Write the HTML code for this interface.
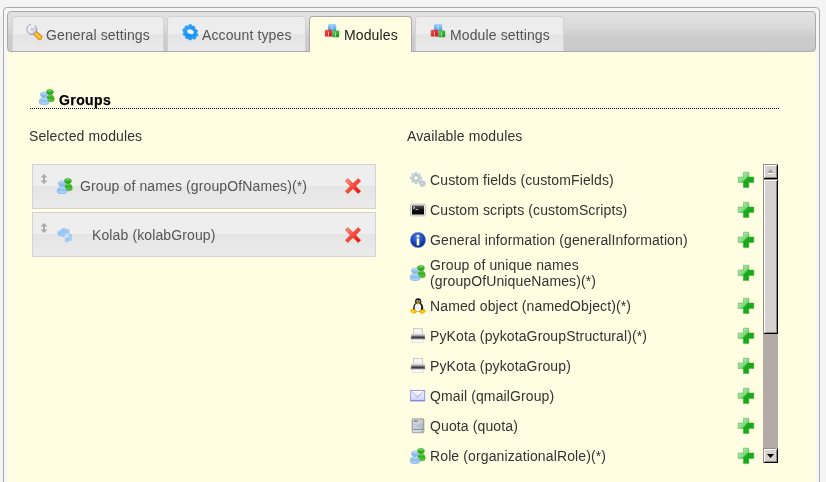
<!DOCTYPE html>
<html><head><meta charset="utf-8">
<style>
html,body{margin:0;padding:0;}
body{width:826px;height:482px;overflow:hidden;background:#f4f4f4;position:relative;font-family:"Liberation Sans",sans-serif;font-size:14px;letter-spacing:0.12px;}
.abs{position:absolute;} .abs>svg{display:block;}
.ic{position:absolute;width:16px;height:16px;}
.ic svg{display:block;overflow:visible;}
#outer{left:3px;top:7px;width:815px;height:520px;border:1px solid #aaaaaa;border-radius:4px;background:#f6f6f8;}
#bar{left:7px;top:11px;width:807px;height:39px;border:1px solid #aaaaaa;border-radius:4px;background:linear-gradient(#e3e3e3 0%,#d9d9d9 40%,#cdcdcd 62%,#cacaca 100%);}
#panel{left:7px;top:52px;width:809px;height:440px;background:#fffde2;}
.tab{position:absolute;top:16px;height:35px;border:1px solid #d3d3d3;border-bottom:0;border-radius:4px 4px 0 0;background:linear-gradient(#ededed 0,#ededed 50%,#e4e4e4 50%,#e9e9e9 100%);color:#555;white-space:nowrap;box-sizing:border-box;}
.tab.active{height:36px;border-color:#aaaaaa;background:#fffde2;color:#212121;}
.tab .ic{left:13px;top:6px;}
.tab span{will-change:transform;position:absolute;left:34px;top:10px;line-height:16px;}
.txt{will-change:transform;position:absolute;white-space:nowrap;line-height:16px;color:#333;}
.box{position:absolute;left:32px;width:344px;height:45px;box-sizing:border-box;border:1px solid #d3d3d3;background:linear-gradient(#eeeeee 0,#eeeeee 50%,#e5e5e5 50%,#ebebeb 100%);}
#sb{left:763px;top:164px;width:15px;height:299px;background:#b3aba8;}
.btn{position:absolute;left:0;width:15px;height:15px;box-sizing:border-box;background:#d6d2cf;box-shadow:inset 1px 1px #948e8b,inset -1px -1px #000,inset 2px 2px #fff,inset -2px -2px #8c8684;}
</style></head><body>
<div id="outer" class="abs"></div>
<div id="bar" class="abs"></div>
<div id="panel" class="abs"></div>

<div class="tab" style="left:12px;width:152px;"><div class="ic" style="left:13px;top:6px;"><svg width="16" height="16" viewBox="0 0 16 16">
<defs><linearGradient id="wh" x1="0" y1="0" x2="1" y2="1"><stop offset="0" stop-color="#ffffff"/><stop offset="0.6" stop-color="#e4e4ee"/><stop offset="1" stop-color="#a4a6bc"/></linearGradient>
<linearGradient id="wo" gradientUnits="userSpaceOnUse" x1="7" y1="14" x2="14" y2="7"><stop offset="0" stop-color="#f08000"/><stop offset="0.5" stop-color="#ffd030"/><stop offset="1" stop-color="#f07000"/></linearGradient>
<mask id="wm"><rect width="16" height="16" fill="#fff"/><path d="M4.8 -1 L8.6 -1 L8.2 4.6 Q6.6 6.4 4.6 5 Z" fill="#000"/></mask></defs>
<g transform="translate(0.2,0.8)"><line x1="8.6" y1="8.8" x2="13.6" y2="13.8" stroke="#d86000" stroke-width="5" stroke-linecap="round"/>
<line x1="8.6" y1="8.8" x2="13.6" y2="13.8" stroke="url(#wo)" stroke-width="3.8" stroke-linecap="round"/>
<circle cx="5.6" cy="5.6" r="5" fill="url(#wh)" stroke="#8a8ca8" stroke-width="0.9" mask="url(#wm)"/>
<path d="M4.6 5 Q6.6 6.4 8.2 4.6" fill="none" stroke="#8a8ca8" stroke-width="0.8"/></g>
</svg></div><span style="left:33px">General settings</span></div>
<div class="tab" style="left:167px;width:139px;"><div class="ic" style="left:13px;top:6px;"><svg width="16" height="16" viewBox="0 0 16 16">
<defs><linearGradient id="gr" x1="0" y1="0" x2="1" y2="1"><stop offset="0" stop-color="#3cb4ff"/><stop offset="0.5" stop-color="#1890f8"/><stop offset="1" stop-color="#2aa8ff"/></linearGradient></defs>
<g transform="translate(9.3,9.6) scale(1.08)">
<path fill="url(#gr)" d="M-1.2 -7.2 L1.2 -7.2 L1.6 -5.6 L3.3 -6.1 L4.4 -4.5 L3.6 -3.3 L5.8 -2.8 L6.6 -1 L5.6 0.4 L7 1.4 L6.8 3.2 L5 3.6 L5.2 5.2 L3.4 6.3 L2.2 5.2 L0.6 6.8 L-1.3 6.6 L-1.7 5 L-3.4 5.8 L-4.6 4.4 L-3.8 3 L-6 2.6 L-6.8 0.8 L-5.6 -0.5 L-7 -1.6 L-6.6 -3.4 L-4.9 -3.7 L-5 -5.4 L-3.3 -6.4 L-2 -5.3 Z" stroke="#2aa0ff" stroke-width="0.8" stroke-linejoin="round"/>
<ellipse cx="-0.2" cy="-0.8" rx="3.2" ry="2.1" transform="rotate(20)" fill="#f4f8fc"/>
</g></svg></div><span>Account types</span></div>
<div class="tab active" style="left:309px;width:103px;"><div class="ic" style="left:13px;top:6px;"><svg width="16" height="16" viewBox="0 0 16 16">
<defs><linearGradient id="cb" x1="0" y1="0" x2="0" y2="1"><stop offset="0" stop-color="#a8d8ff"/><stop offset="1" stop-color="#3a8ee0"/></linearGradient>
<linearGradient id="cr" x1="0" y1="0" x2="1" y2="1"><stop offset="0" stop-color="#f06060"/><stop offset="1" stop-color="#d00000"/></linearGradient>
<linearGradient id="cg" x1="0" y1="0" x2="1" y2="1"><stop offset="0" stop-color="#70d070"/><stop offset="1" stop-color="#109010"/></linearGradient></defs>
<rect x="5" y="1" width="8.2" height="7.4" rx="1.2" fill="url(#cb)"/>
<rect x="1.8" y="6.8" width="7.6" height="6.8" rx="1.2" fill="url(#cr)"/>
<rect x="8.8" y="7.4" width="7.4" height="6.8" rx="1.2" fill="url(#cg)"/>
<rect x="8.7" y="3" width="0.7" height="4" fill="#fff" opacity="0.8"/><rect x="5.2" y="8.8" width="0.7" height="4" fill="#fff" opacity="0.8"/><rect x="12" y="9.5" width="0.7" height="4" fill="#fff" opacity="0.8"/>
</svg></div><span>Modules</span></div>
<div class="tab" style="left:415px;width:149px;"><div class="ic" style="left:13px;top:6px;"><svg width="16" height="16" viewBox="0 0 16 16">
<defs><linearGradient id="cb" x1="0" y1="0" x2="0" y2="1"><stop offset="0" stop-color="#a8d8ff"/><stop offset="1" stop-color="#3a8ee0"/></linearGradient>
<linearGradient id="cr" x1="0" y1="0" x2="1" y2="1"><stop offset="0" stop-color="#f06060"/><stop offset="1" stop-color="#d00000"/></linearGradient>
<linearGradient id="cg" x1="0" y1="0" x2="1" y2="1"><stop offset="0" stop-color="#70d070"/><stop offset="1" stop-color="#109010"/></linearGradient></defs>
<rect x="5" y="1" width="8.2" height="7.4" rx="1.2" fill="url(#cb)"/>
<rect x="1.8" y="6.8" width="7.6" height="6.8" rx="1.2" fill="url(#cr)"/>
<rect x="8.8" y="7.4" width="7.4" height="6.8" rx="1.2" fill="url(#cg)"/>
<rect x="8.7" y="3" width="0.7" height="4" fill="#fff" opacity="0.8"/><rect x="5.2" y="8.8" width="0.7" height="4" fill="#fff" opacity="0.8"/><rect x="12" y="9.5" width="0.7" height="4" fill="#fff" opacity="0.8"/>
</svg></div><span>Module settings</span></div>

<div class="ic" style="left:39px;top:89px;"><svg width="16" height="16" viewBox="0 0 16 16">
<defs><linearGradient id="gg" x1="0" y1="0" x2="0" y2="1"><stop offset="0" stop-color="#a0f080"/><stop offset="0.5" stop-color="#30b81c"/><stop offset="1" stop-color="#2aa818"/></linearGradient>
<linearGradient id="gg2" x1="0" y1="0" x2="0" y2="1"><stop offset="0" stop-color="#90e870"/><stop offset="0.35" stop-color="#2cb01a"/><stop offset="1" stop-color="#58d030"/></linearGradient>
<linearGradient id="gb" x1="0" y1="0" x2="0" y2="1"><stop offset="0" stop-color="#e0f0ff"/><stop offset="0.5" stop-color="#90c4f4"/><stop offset="1" stop-color="#84bcf0"/></linearGradient>
<linearGradient id="gb2" x1="0" y1="0" x2="0" y2="1"><stop offset="0" stop-color="#cfe6ff"/><stop offset="0.4" stop-color="#88c0f2"/><stop offset="1" stop-color="#b4d8fc"/></linearGradient></defs>
<path d="M7.6 10.8 C7.5 8.2 8.6 5.6 11.4 5.6 C14.2 5.6 15.3 8.2 15.2 10.8 C15.2 12.3 13.8 12.7 11.4 12.7 C9 12.7 7.6 12.3 7.6 10.8 Z" fill="url(#gg2)" stroke="#2c8c1c" stroke-width="0.5"/>
<ellipse cx="10.9" cy="2.9" rx="3.5" ry="2.6" fill="url(#gg)" stroke="#2c8c1c" stroke-width="0.5"/>
<path d="M0.3 13.4 C0.1 10.8 1.4 8.6 5 8.6 C8.6 8.6 10 10.8 9.8 13.4 C9.8 15.1 8 15.6 5 15.6 C2 15.6 0.3 15.1 0.3 13.4 Z" fill="url(#gb2)" stroke="#6a9ad4" stroke-width="0.5"/>
<ellipse cx="4.9" cy="5.6" rx="3.4" ry="2.7" fill="url(#gb)" stroke="#6a9ad4" stroke-width="0.5"/>
</svg></div>
<div class="txt" style="left:59px;top:92px;font-weight:bold;color:#000;font-size:14px;letter-spacing:0.4px;-webkit-text-stroke:0.25px #000;">Groups</div>
<div class="abs" style="left:30px;top:108px;width:749px;height:1px;background:repeating-linear-gradient(90deg,#000 0,#000 1px,transparent 1px,transparent 2px);"></div>

<div class="txt" style="left:29px;top:128px;">Selected modules</div>
<div class="txt" style="left:407px;top:128px;">Available modules</div>

<div class="box" style="top:164px;"></div>
<div class="box" style="top:212px;"></div>
<div class="abs" style="left:40px;top:174px;line-height:0"><svg width="8" height="10" viewBox="0 0 8 10"><path d="M4 0 L7.5 3.5 L5 3.5 L5 6.5 L7.5 6.5 L4 10 L0.5 6.5 L3 6.5 L3 3.5 L0.5 3.5 Z" fill="#ababab"/></svg></div>
<div class="abs" style="left:40px;top:223px;line-height:0"><svg width="8" height="10" viewBox="0 0 8 10"><path d="M4 0 L7.5 3.5 L5 3.5 L5 6.5 L7.5 6.5 L4 10 L0.5 6.5 L3 6.5 L3 3.5 L0.5 3.5 Z" fill="#ababab"/></svg></div>
<div class="ic" style="left:57px;top:178px;"><svg width="16" height="16" viewBox="0 0 16 16">
<defs><linearGradient id="gg" x1="0" y1="0" x2="0" y2="1"><stop offset="0" stop-color="#a0f080"/><stop offset="0.5" stop-color="#30b81c"/><stop offset="1" stop-color="#2aa818"/></linearGradient>
<linearGradient id="gg2" x1="0" y1="0" x2="0" y2="1"><stop offset="0" stop-color="#90e870"/><stop offset="0.35" stop-color="#2cb01a"/><stop offset="1" stop-color="#58d030"/></linearGradient>
<linearGradient id="gb" x1="0" y1="0" x2="0" y2="1"><stop offset="0" stop-color="#e0f0ff"/><stop offset="0.5" stop-color="#90c4f4"/><stop offset="1" stop-color="#84bcf0"/></linearGradient>
<linearGradient id="gb2" x1="0" y1="0" x2="0" y2="1"><stop offset="0" stop-color="#cfe6ff"/><stop offset="0.4" stop-color="#88c0f2"/><stop offset="1" stop-color="#b4d8fc"/></linearGradient></defs>
<path d="M7.6 10.8 C7.5 8.2 8.6 5.6 11.4 5.6 C14.2 5.6 15.3 8.2 15.2 10.8 C15.2 12.3 13.8 12.7 11.4 12.7 C9 12.7 7.6 12.3 7.6 10.8 Z" fill="url(#gg2)" stroke="#2c8c1c" stroke-width="0.5"/>
<ellipse cx="10.9" cy="2.9" rx="3.5" ry="2.6" fill="url(#gg)" stroke="#2c8c1c" stroke-width="0.5"/>
<path d="M0.3 13.4 C0.1 10.8 1.4 8.6 5 8.6 C8.6 8.6 10 10.8 9.8 13.4 C9.8 15.1 8 15.6 5 15.6 C2 15.6 0.3 15.1 0.3 13.4 Z" fill="url(#gb2)" stroke="#6a9ad4" stroke-width="0.5"/>
<ellipse cx="4.9" cy="5.6" rx="3.4" ry="2.7" fill="url(#gb)" stroke="#6a9ad4" stroke-width="0.5"/>
</svg></div>
<div class="ic" style="left:57px;top:227px;"><svg width="16" height="16" viewBox="0 0 16 16"><g fill="#a2cbf6">
<circle cx="3.2" cy="6.2" r="3"/><circle cx="6.6" cy="4" r="3.1"/><circle cx="10.2" cy="4.6" r="2.6"/><circle cx="6" cy="7.4" r="2.6"/>
<circle cx="13" cy="9" r="2.2"/><circle cx="10.2" cy="12" r="2.5"/><circle cx="13" cy="12" r="2.1"/><circle cx="9.5" cy="14" r="1.6"/>
</g><g fill="#8cbcf0" opacity="0.6"><circle cx="6.6" cy="4.5" r="1.5"/><circle cx="3" cy="6.5" r="1.3"/><circle cx="11" cy="12" r="1.2"/></g>
<path d="M8.8 9.6 Q11 8.6 12.2 10" stroke="#eeeeee" stroke-width="1" fill="none"/></svg></div>
<div class="txt" style="left:80px;top:178px;color:#555;">Group of names (groupOfNames)(*)</div>
<div class="txt" style="left:92px;top:227px;color:#555;">Kolab (kolabGroup)</div>
<div class="ic" style="left:345px;top:178px;"><svg width="16" height="16" viewBox="0 0 16 16">
<defs><linearGradient id="xr" x1="0" y1="0" x2="1" y2="1"><stop offset="0" stop-color="#ff9a88"/><stop offset="0.5" stop-color="#f84a3a"/><stop offset="1" stop-color="#ee0000"/></linearGradient></defs>
<path d="M2.8 0.6 L8 5.6 L13.2 0.6 L15.6 3 L10.6 8.1 L15.6 13.2 L13.2 15.6 L8 10.5 L2.8 15.6 L0.4 13.2 L5.4 8.1 L0.4 3 Z" fill="url(#xr)" stroke="#c82010" stroke-width="0.5" stroke-linejoin="round"/>
</svg></div>
<div class="ic" style="left:345px;top:227px;"><svg width="16" height="16" viewBox="0 0 16 16">
<defs><linearGradient id="xr" x1="0" y1="0" x2="1" y2="1"><stop offset="0" stop-color="#ff9a88"/><stop offset="0.5" stop-color="#f84a3a"/><stop offset="1" stop-color="#ee0000"/></linearGradient></defs>
<path d="M2.8 0.6 L8 5.6 L13.2 0.6 L15.6 3 L10.6 8.1 L15.6 13.2 L13.2 15.6 L8 10.5 L2.8 15.6 L0.4 13.2 L5.4 8.1 L0.4 3 Z" fill="url(#xr)" stroke="#c82010" stroke-width="0.5" stroke-linejoin="round"/>
</svg></div>

<div class="ic" style="left:410px;top:172px;"><svg width="16" height="16" viewBox="0 0 16 16">
<g fill="#cbd8e6" stroke="#9fb0c4" stroke-width="0.6">
<path d="M5.2 0.6 L6.8 0.6 L7.1 2 L8.3 2.5 L9.4 1.6 L10.5 2.7 L9.7 3.8 L10.2 5 L11.6 5.3 L11.6 6.9 L10.2 7.2 L9.7 8.4 L10.5 9.5 L9.4 10.6 L8.3 9.8 L7.1 10.3 L6.8 11.6 L5.2 11.6 L4.9 10.3 L3.7 9.8 L2.6 10.6 L1.5 9.5 L2.3 8.4 L1.8 7.2 L0.4 6.9 L0.4 5.3 L1.8 5 L2.3 3.8 L1.5 2.7 L2.6 1.6 L3.7 2.5 L4.9 2 Z"/>
<path d="M11.9 8.6 L13 8.6 L13.3 9.5 L14.2 9.1 L14.9 9.9 L14.4 10.7 L15.4 11 L15.4 12.1 L14.4 12.4 L14.9 13.2 L14.2 14 L13.3 13.6 L13 14.6 L11.9 14.6 L11.6 13.6 L10.7 14 L10 13.2 L10.5 12.4 L9.5 12.1 L9.5 11 L10.5 10.7 L10 9.9 L10.7 9.1 L11.6 9.5 Z"/>
</g>
<circle cx="6" cy="6.1" r="2.5" fill="#fffde2" stroke="#8a9cb2" stroke-width="0.7"/>
<circle cx="12.45" cy="11.6" r="1.1" fill="#fffde2" stroke="#8a9cb2" stroke-width="0.5"/>
</svg></div><div class="txt" style="left:430px;top:172px;">Custom fields (customFields)</div><div class="ic" style="left:738px;top:172px;"><svg width="16" height="16" viewBox="0 0 16 16">
<defs><linearGradient id="pg" x1="0" y1="0" x2="1" y2="1"><stop offset="0" stop-color="#c8f0c8"/><stop offset="0.42" stop-color="#7ed87e"/><stop offset="0.5" stop-color="#1aa81a"/><stop offset="1" stop-color="#10b010"/></linearGradient></defs>
<path d="M5.4 0.2 L10.8 0.2 L10.8 5 L15.8 5 L15.8 10.6 L10.8 10.6 L10.8 15.6 L5.4 15.6 L5.4 10.6 L0.2 10.6 L0.2 5 L5.4 5 Z" fill="url(#pg)" stroke="#2aa02a" stroke-width="0.4" stroke-linejoin="round"/>
</svg></div><div class="ic" style="left:410px;top:202px;"><svg width="16" height="16" viewBox="0 0 16 16">
<defs><linearGradient id="tg" x1="0" y1="0" x2="0" y2="1"><stop offset="0" stop-color="#555"/><stop offset="0.5" stop-color="#111"/><stop offset="1" stop-color="#000"/></linearGradient></defs>
<rect x="0.6" y="2.1" width="14.8" height="11.8" rx="1" fill="#ececec" stroke="#b4b4b4" stroke-width="0.8"/>
<rect x="2" y="3.5" width="12" height="9" fill="url(#tg)"/>
<path d="M3 4.6 L5 5.8 L3 7" stroke="#fff" stroke-width="0.7" fill="none"/><rect x="5.5" y="7" width="2.5" height="0.8" fill="#ddd"/>
</svg></div><div class="txt" style="left:430px;top:202px;">Custom scripts (customScripts)</div><div class="ic" style="left:738px;top:202px;"><svg width="16" height="16" viewBox="0 0 16 16">
<defs><linearGradient id="pg" x1="0" y1="0" x2="1" y2="1"><stop offset="0" stop-color="#c8f0c8"/><stop offset="0.42" stop-color="#7ed87e"/><stop offset="0.5" stop-color="#1aa81a"/><stop offset="1" stop-color="#10b010"/></linearGradient></defs>
<path d="M5.4 0.2 L10.8 0.2 L10.8 5 L15.8 5 L15.8 10.6 L10.8 10.6 L10.8 15.6 L5.4 15.6 L5.4 10.6 L0.2 10.6 L0.2 5 L5.4 5 Z" fill="url(#pg)" stroke="#2aa02a" stroke-width="0.4" stroke-linejoin="round"/>
</svg></div><div class="ic" style="left:410px;top:232px;"><svg width="16" height="16" viewBox="0 0 16 16">
<defs><radialGradient id="ib" cx="0.45" cy="0.3" r="0.75"><stop offset="0" stop-color="#4a7ee8"/><stop offset="0.6" stop-color="#1a3eb0"/><stop offset="1" stop-color="#0a2a88"/></radialGradient></defs>
<circle cx="8" cy="8" r="7.7" fill="url(#ib)" stroke="#8aa8e0" stroke-width="0.4"/>
<circle cx="8" cy="4.2" r="1.4" fill="#fff"/><rect x="6.7" y="6.4" width="2.6" height="7" fill="#fff"/>
</svg></div><div class="txt" style="left:430px;top:232px;">General information (generalInformation)</div><div class="ic" style="left:738px;top:232px;"><svg width="16" height="16" viewBox="0 0 16 16">
<defs><linearGradient id="pg" x1="0" y1="0" x2="1" y2="1"><stop offset="0" stop-color="#c8f0c8"/><stop offset="0.42" stop-color="#7ed87e"/><stop offset="0.5" stop-color="#1aa81a"/><stop offset="1" stop-color="#10b010"/></linearGradient></defs>
<path d="M5.4 0.2 L10.8 0.2 L10.8 5 L15.8 5 L15.8 10.6 L10.8 10.6 L10.8 15.6 L5.4 15.6 L5.4 10.6 L0.2 10.6 L0.2 5 L5.4 5 Z" fill="url(#pg)" stroke="#2aa02a" stroke-width="0.4" stroke-linejoin="round"/>
</svg></div><div class="ic" style="left:410px;top:265px;"><svg width="16" height="16" viewBox="0 0 16 16">
<defs><linearGradient id="gg" x1="0" y1="0" x2="0" y2="1"><stop offset="0" stop-color="#a0f080"/><stop offset="0.5" stop-color="#30b81c"/><stop offset="1" stop-color="#2aa818"/></linearGradient>
<linearGradient id="gg2" x1="0" y1="0" x2="0" y2="1"><stop offset="0" stop-color="#90e870"/><stop offset="0.35" stop-color="#2cb01a"/><stop offset="1" stop-color="#58d030"/></linearGradient>
<linearGradient id="gb" x1="0" y1="0" x2="0" y2="1"><stop offset="0" stop-color="#e0f0ff"/><stop offset="0.5" stop-color="#90c4f4"/><stop offset="1" stop-color="#84bcf0"/></linearGradient>
<linearGradient id="gb2" x1="0" y1="0" x2="0" y2="1"><stop offset="0" stop-color="#cfe6ff"/><stop offset="0.4" stop-color="#88c0f2"/><stop offset="1" stop-color="#b4d8fc"/></linearGradient></defs>
<path d="M7.6 10.8 C7.5 8.2 8.6 5.6 11.4 5.6 C14.2 5.6 15.3 8.2 15.2 10.8 C15.2 12.3 13.8 12.7 11.4 12.7 C9 12.7 7.6 12.3 7.6 10.8 Z" fill="url(#gg2)" stroke="#2c8c1c" stroke-width="0.5"/>
<ellipse cx="10.9" cy="2.9" rx="3.5" ry="2.6" fill="url(#gg)" stroke="#2c8c1c" stroke-width="0.5"/>
<path d="M0.3 13.4 C0.1 10.8 1.4 8.6 5 8.6 C8.6 8.6 10 10.8 9.8 13.4 C9.8 15.1 8 15.6 5 15.6 C2 15.6 0.3 15.1 0.3 13.4 Z" fill="url(#gb2)" stroke="#6a9ad4" stroke-width="0.5"/>
<ellipse cx="4.9" cy="5.6" rx="3.4" ry="2.7" fill="url(#gb)" stroke="#6a9ad4" stroke-width="0.5"/>
</svg></div><div class="txt" style="left:430px;top:257px;">Group of unique names<br>(groupOfUniqueNames)(*)</div><div class="ic" style="left:738px;top:265px;"><svg width="16" height="16" viewBox="0 0 16 16">
<defs><linearGradient id="pg" x1="0" y1="0" x2="1" y2="1"><stop offset="0" stop-color="#c8f0c8"/><stop offset="0.42" stop-color="#7ed87e"/><stop offset="0.5" stop-color="#1aa81a"/><stop offset="1" stop-color="#10b010"/></linearGradient></defs>
<path d="M5.4 0.2 L10.8 0.2 L10.8 5 L15.8 5 L15.8 10.6 L10.8 10.6 L10.8 15.6 L5.4 15.6 L5.4 10.6 L0.2 10.6 L0.2 5 L5.4 5 Z" fill="url(#pg)" stroke="#2aa02a" stroke-width="0.4" stroke-linejoin="round"/>
</svg></div><div class="ic" style="left:410px;top:298px;"><svg width="16" height="16" viewBox="0 0 16 16">
<ellipse cx="8.2" cy="3.4" rx="3.1" ry="3.2" fill="#151515"/>
<path d="M4.6 5.5 C3.2 8 2.6 11 3.6 13.4 L12.8 13.4 C13.8 11 13.2 8 11.8 5.5 Z" fill="#151515"/>
<ellipse cx="7.9" cy="9.6" rx="3.3" ry="4.1" fill="#f2f2f2"/>
<ellipse cx="7.2" cy="2.9" rx="0.9" ry="1" fill="#e8e8e8"/><ellipse cx="9.4" cy="2.9" rx="0.9" ry="1" fill="#e8e8e8"/>
<ellipse cx="7.2" cy="3.1" rx="0.4" ry="0.5" fill="#111"/><ellipse cx="9.4" cy="3.1" rx="0.4" ry="0.5" fill="#111"/>
<path d="M6.2 4.6 Q8.2 3.8 10.2 4.6 L8.2 6.4 Z" fill="#f4b000"/>
<ellipse cx="3.6" cy="13.2" rx="3" ry="1.9" transform="rotate(20 3.6 13.2)" fill="#ffcc00" stroke="#d09a00" stroke-width="0.4"/>
<ellipse cx="12.6" cy="13.4" rx="3" ry="1.8" transform="rotate(-15 12.6 13.4)" fill="#ffcc00" stroke="#d09a00" stroke-width="0.4"/>
</svg></div><div class="txt" style="left:430px;top:298px;">Named object (namedObject)(*)</div><div class="ic" style="left:738px;top:298px;"><svg width="16" height="16" viewBox="0 0 16 16">
<defs><linearGradient id="pg" x1="0" y1="0" x2="1" y2="1"><stop offset="0" stop-color="#c8f0c8"/><stop offset="0.42" stop-color="#7ed87e"/><stop offset="0.5" stop-color="#1aa81a"/><stop offset="1" stop-color="#10b010"/></linearGradient></defs>
<path d="M5.4 0.2 L10.8 0.2 L10.8 5 L15.8 5 L15.8 10.6 L10.8 10.6 L10.8 15.6 L5.4 15.6 L5.4 10.6 L0.2 10.6 L0.2 5 L5.4 5 Z" fill="url(#pg)" stroke="#2aa02a" stroke-width="0.4" stroke-linejoin="round"/>
</svg></div><div class="ic" style="left:410px;top:328px;"><svg width="16" height="16" viewBox="0 0 16 16">
<defs><linearGradient id="pr" x1="0" y1="0" x2="0" y2="1"><stop offset="0" stop-color="#e4e4e4"/><stop offset="0.3" stop-color="#9a9a9a"/><stop offset="0.55" stop-color="#303030"/><stop offset="0.8" stop-color="#707070"/><stop offset="1" stop-color="#d8d8d8"/></linearGradient></defs>
<rect x="3.6" y="0.6" width="8.8" height="6.4" fill="#f4f4f4" stroke="#b4b4b4" stroke-width="0.6"/>
<path d="M1.4 6.2 L14.6 6.2 L15.2 11.6 L0.8 11.6 Z" fill="url(#pr)" stroke="#b0b0b0" stroke-width="0.4"/>
<rect x="2.8" y="11.6" width="10.4" height="3.2" fill="#fafafa" stroke="#c8c8c8" stroke-width="0.5"/>
</svg></div><div class="txt" style="left:430px;top:328px;">PyKota (pykotaGroupStructural)(*)</div><div class="ic" style="left:738px;top:328px;"><svg width="16" height="16" viewBox="0 0 16 16">
<defs><linearGradient id="pg" x1="0" y1="0" x2="1" y2="1"><stop offset="0" stop-color="#c8f0c8"/><stop offset="0.42" stop-color="#7ed87e"/><stop offset="0.5" stop-color="#1aa81a"/><stop offset="1" stop-color="#10b010"/></linearGradient></defs>
<path d="M5.4 0.2 L10.8 0.2 L10.8 5 L15.8 5 L15.8 10.6 L10.8 10.6 L10.8 15.6 L5.4 15.6 L5.4 10.6 L0.2 10.6 L0.2 5 L5.4 5 Z" fill="url(#pg)" stroke="#2aa02a" stroke-width="0.4" stroke-linejoin="round"/>
</svg></div><div class="ic" style="left:410px;top:358px;"><svg width="16" height="16" viewBox="0 0 16 16">
<defs><linearGradient id="pr" x1="0" y1="0" x2="0" y2="1"><stop offset="0" stop-color="#e4e4e4"/><stop offset="0.3" stop-color="#9a9a9a"/><stop offset="0.55" stop-color="#303030"/><stop offset="0.8" stop-color="#707070"/><stop offset="1" stop-color="#d8d8d8"/></linearGradient></defs>
<rect x="3.6" y="0.6" width="8.8" height="6.4" fill="#f4f4f4" stroke="#b4b4b4" stroke-width="0.6"/>
<path d="M1.4 6.2 L14.6 6.2 L15.2 11.6 L0.8 11.6 Z" fill="url(#pr)" stroke="#b0b0b0" stroke-width="0.4"/>
<rect x="2.8" y="11.6" width="10.4" height="3.2" fill="#fafafa" stroke="#c8c8c8" stroke-width="0.5"/>
</svg></div><div class="txt" style="left:430px;top:358px;">PyKota (pykotaGroup)</div><div class="ic" style="left:738px;top:358px;"><svg width="16" height="16" viewBox="0 0 16 16">
<defs><linearGradient id="pg" x1="0" y1="0" x2="1" y2="1"><stop offset="0" stop-color="#c8f0c8"/><stop offset="0.42" stop-color="#7ed87e"/><stop offset="0.5" stop-color="#1aa81a"/><stop offset="1" stop-color="#10b010"/></linearGradient></defs>
<path d="M5.4 0.2 L10.8 0.2 L10.8 5 L15.8 5 L15.8 10.6 L10.8 10.6 L10.8 15.6 L5.4 15.6 L5.4 10.6 L0.2 10.6 L0.2 5 L5.4 5 Z" fill="url(#pg)" stroke="#2aa02a" stroke-width="0.4" stroke-linejoin="round"/>
</svg></div><div class="ic" style="left:410px;top:387px;"><svg width="16" height="16" viewBox="0 0 16 16">
<defs><linearGradient id="mg" x1="0" y1="0" x2="0" y2="1"><stop offset="0" stop-color="#ffffff"/><stop offset="1" stop-color="#c8ccfc"/></linearGradient></defs>
<rect x="0.7" y="3.4" width="14" height="10.6" fill="url(#mg)" stroke="#8a8ee0" stroke-width="0.9"/>
<path d="M1.6 4.4 L7.7 10.2 L13.8 4.4" fill="none" stroke="#8a8ed8" stroke-width="0.7"/>
<rect x="0.7" y="13.2" width="14" height="0.8" fill="#7a7ed8"/>
</svg></div><div class="txt" style="left:430px;top:388px;">Qmail (qmailGroup)</div><div class="ic" style="left:738px;top:388px;"><svg width="16" height="16" viewBox="0 0 16 16">
<defs><linearGradient id="pg" x1="0" y1="0" x2="1" y2="1"><stop offset="0" stop-color="#c8f0c8"/><stop offset="0.42" stop-color="#7ed87e"/><stop offset="0.5" stop-color="#1aa81a"/><stop offset="1" stop-color="#10b010"/></linearGradient></defs>
<path d="M5.4 0.2 L10.8 0.2 L10.8 5 L15.8 5 L15.8 10.6 L10.8 10.6 L10.8 15.6 L5.4 15.6 L5.4 10.6 L0.2 10.6 L0.2 5 L5.4 5 Z" fill="url(#pg)" stroke="#2aa02a" stroke-width="0.4" stroke-linejoin="round"/>
</svg></div><div class="ic" style="left:410px;top:418px;"><svg width="16" height="16" viewBox="0 0 16 16">
<defs><linearGradient id="dg" x1="0" y1="0" x2="1" y2="1"><stop offset="0" stop-color="#e4e8ee"/><stop offset="1" stop-color="#a8aeb8"/></linearGradient></defs>
<rect x="2.2" y="0.9" width="11.6" height="13.8" rx="0.8" fill="url(#dg)" stroke="#6c7280" stroke-width="0.7"/>
<rect x="3.6" y="2.6" width="4.2" height="1" fill="#555a66"/>
<path d="M3.5 6 Q8 9 12.5 6.5" stroke="#9aa0ac" stroke-width="0.5" fill="none"/>
<rect x="2.5" y="11.3" width="11" height="0.7" fill="#7a808c"/>
<rect x="2.5" y="12" width="11" height="2.4" fill="#d4d8de"/><rect x="11.6" y="12.8" width="1.2" height="1" fill="#20c020"/>
</svg></div><div class="txt" style="left:430px;top:418px;">Quota (quota)</div><div class="ic" style="left:738px;top:418px;"><svg width="16" height="16" viewBox="0 0 16 16">
<defs><linearGradient id="pg" x1="0" y1="0" x2="1" y2="1"><stop offset="0" stop-color="#c8f0c8"/><stop offset="0.42" stop-color="#7ed87e"/><stop offset="0.5" stop-color="#1aa81a"/><stop offset="1" stop-color="#10b010"/></linearGradient></defs>
<path d="M5.4 0.2 L10.8 0.2 L10.8 5 L15.8 5 L15.8 10.6 L10.8 10.6 L10.8 15.6 L5.4 15.6 L5.4 10.6 L0.2 10.6 L0.2 5 L5.4 5 Z" fill="url(#pg)" stroke="#2aa02a" stroke-width="0.4" stroke-linejoin="round"/>
</svg></div><div class="ic" style="left:410px;top:448px;"><svg width="16" height="16" viewBox="0 0 16 16">
<defs><linearGradient id="gg" x1="0" y1="0" x2="0" y2="1"><stop offset="0" stop-color="#a0f080"/><stop offset="0.5" stop-color="#30b81c"/><stop offset="1" stop-color="#2aa818"/></linearGradient>
<linearGradient id="gg2" x1="0" y1="0" x2="0" y2="1"><stop offset="0" stop-color="#90e870"/><stop offset="0.35" stop-color="#2cb01a"/><stop offset="1" stop-color="#58d030"/></linearGradient>
<linearGradient id="gb" x1="0" y1="0" x2="0" y2="1"><stop offset="0" stop-color="#e0f0ff"/><stop offset="0.5" stop-color="#90c4f4"/><stop offset="1" stop-color="#84bcf0"/></linearGradient>
<linearGradient id="gb2" x1="0" y1="0" x2="0" y2="1"><stop offset="0" stop-color="#cfe6ff"/><stop offset="0.4" stop-color="#88c0f2"/><stop offset="1" stop-color="#b4d8fc"/></linearGradient></defs>
<path d="M7.6 10.8 C7.5 8.2 8.6 5.6 11.4 5.6 C14.2 5.6 15.3 8.2 15.2 10.8 C15.2 12.3 13.8 12.7 11.4 12.7 C9 12.7 7.6 12.3 7.6 10.8 Z" fill="url(#gg2)" stroke="#2c8c1c" stroke-width="0.5"/>
<ellipse cx="10.9" cy="2.9" rx="3.5" ry="2.6" fill="url(#gg)" stroke="#2c8c1c" stroke-width="0.5"/>
<path d="M0.3 13.4 C0.1 10.8 1.4 8.6 5 8.6 C8.6 8.6 10 10.8 9.8 13.4 C9.8 15.1 8 15.6 5 15.6 C2 15.6 0.3 15.1 0.3 13.4 Z" fill="url(#gb2)" stroke="#6a9ad4" stroke-width="0.5"/>
<ellipse cx="4.9" cy="5.6" rx="3.4" ry="2.7" fill="url(#gb)" stroke="#6a9ad4" stroke-width="0.5"/>
</svg></div><div class="txt" style="left:430px;top:448px;">Role (organizationalRole)(*)</div><div class="ic" style="left:738px;top:448px;"><svg width="16" height="16" viewBox="0 0 16 16">
<defs><linearGradient id="pg" x1="0" y1="0" x2="1" y2="1"><stop offset="0" stop-color="#c8f0c8"/><stop offset="0.42" stop-color="#7ed87e"/><stop offset="0.5" stop-color="#1aa81a"/><stop offset="1" stop-color="#10b010"/></linearGradient></defs>
<path d="M5.4 0.2 L10.8 0.2 L10.8 5 L15.8 5 L15.8 10.6 L10.8 10.6 L10.8 15.6 L5.4 15.6 L5.4 10.6 L0.2 10.6 L0.2 5 L5.4 5 Z" fill="url(#pg)" stroke="#2aa02a" stroke-width="0.4" stroke-linejoin="round"/>
</svg></div>

<div id="sb" class="abs">
 <div class="btn" style="top:0;"><svg width="15" height="15" style="position:absolute;left:0;top:0"><path d="M4 9 L7.5 5 L11 9 Z" fill="#a9a3a0"/><rect x="5" y="9" width="6" height="1" fill="#fff"/></svg></div>
 <div class="btn" style="top:15px;height:155px;"></div>
 <div class="btn" style="top:284px;"><svg width="15" height="15" style="position:absolute;left:0;top:0"><path d="M4 6 L11 6 L7.5 10 Z" fill="#000"/></svg></div>
</div>
</body></html>
